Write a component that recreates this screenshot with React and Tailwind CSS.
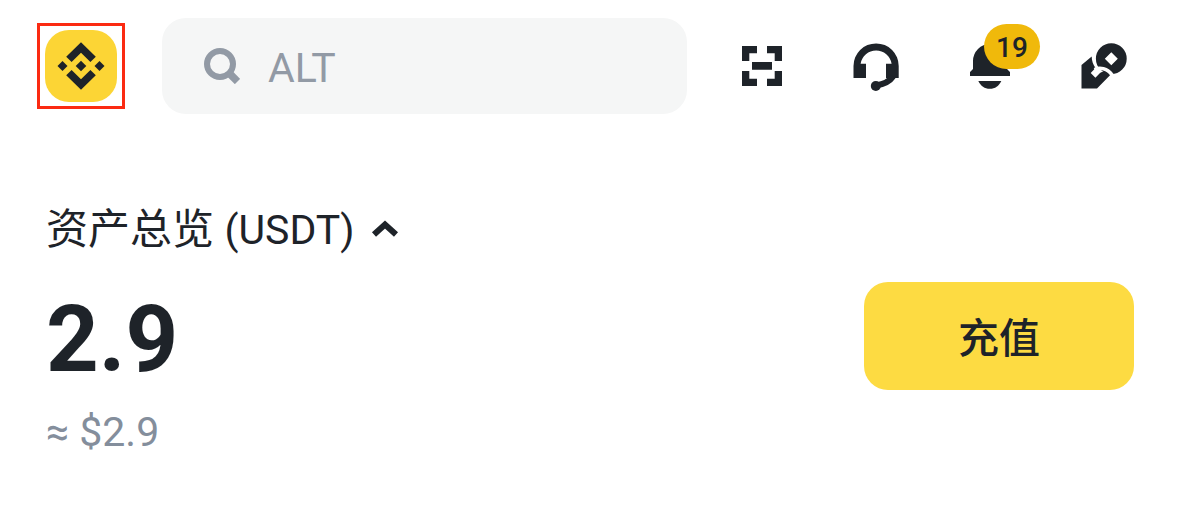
const INK = "text-[#1e2329]";

function BrandLogo() {
  return (
    <svg viewBox="0 0 72 72" className="size-full" fill="currentColor" aria-hidden="true">
      <path d="M36 12.3 50.8 26.8 45.4 32 36 22.8 26.6 32 21.2 26.8Z" />
      <path d="M36 59.7 50.8 45.2 45.4 40 36 49.2 26.6 40 21.2 45.2Z" />
      <path d="M36 30.7 41.3 36 36 41.3 30.7 36Z" />
      <path d="M17.5 31 22.5 36 17.5 41 12.5 36Z" />
      <path d="M54.5 31 59.5 36 54.5 41 49.5 36Z" />
    </svg>
  );
}

function SearchIcon() {
  return (
    <svg viewBox="0 0 36 36" className="size-9 shrink-0" fill="none" stroke="currentColor" strokeWidth="6" aria-hidden="true">
      <circle cx="16" cy="16" r="13" />
      <path d="M25 25 33.5 33.5" strokeWidth="7.5" />
    </svg>
  );
}

function ScanIcon() {
  return (
    <svg viewBox="0 0 48 48" className="size-12" fill="currentColor" aria-hidden="true">
      <path d="M4 4H19V11.3H11.3V19H4ZM29 4H44V19H36.7V11.3H29ZM4 29H11.3V36.7H19V44H4ZM36.7 29H44V44H29V36.7H36.7ZM14 20H34V27.7H14Z" />
    </svg>
  );
}

function HeadsetIcon() {
  return (
    <svg viewBox="0 0 48 48" className="size-12 overflow-visible" fill="currentColor" aria-hidden="true">
      <path d="M1.5 36V24A22.6 22.6 0 0 1 46.7 24V36H34V21.7H39.6A15.7 15.7 0 0 0 8.6 21.7H14V36Z" />
      <path d="M41 34.5C38 39 33 42 24 43.5" fill="none" stroke="currentColor" strokeWidth="6" />
      <circle cx="23.8" cy="44" r="5" />
    </svg>
  );
}

function BellIcon() {
  return (
    <svg viewBox="0 0 48 48" className="size-12" fill="currentColor" aria-hidden="true">
      <path d="M7 19A17 17 0 0 1 41 19V27L44 30V34H4V30L7 27Z" />
      <path d="M12.3 39H35.3C33 44 29 46.8 23.8 46.8S14.7 44 12.3 39Z" />
    </svg>
  );
}

function HandCoinIcon() {
  return (
    <svg viewBox="0 0 48 48" className="size-12" fill="currentColor" aria-hidden="true">
      <path fillRule="evenodd" d="M31.3 1.3A15.4 15.4 0 1 1 31.3 32.1A15.4 15.4 0 1 1 31.3 1.3ZM31.3 10.2 24.8 16.7 31.3 23.2 37.8 16.7Z" />
      <path d="M1.5 46.5V23L11.7 14.5C11.7 18.5 13 22.5 15.5 26L10.7 31 15.4 35.7 20 31C23 29 27 29.5 30.5 32.7L17 46.5Z" />
      <path d="M14.5 27.5C19.5 25 27.5 26 32 33" fill="none" stroke="white" strokeWidth="3.5" />
    </svg>
  );
}

function ActionButton({ label, children }) {
  return (
    <button type="button" aria-label={label} className="relative size-12 shrink-0">
      {children}
    </button>
  );
}

export default function App() {
  return (
    <div className={`bg-white font-[Roboto,'Noto_Sans_CJK_SC',sans-serif] ${INK}`}>
      <header className="flex items-center pt-[18px] pr-[51px] pl-[37px]">
        <button
          type="button"
          aria-label="Binance"
          className="shrink-0 border-3 border-[#fb2a12] px-[5px] py-1"
        >
          <span className="block size-18 rounded-3xl bg-[#fcd535]">
            <BrandLogo />
          </span>
        </button>
        <label className="mr-[51px] ml-[37px] flex h-24 min-w-0 flex-1 items-center gap-7 rounded-3xl bg-[#f5f6f6] px-[42px] text-[#929aa5]">
          <SearchIcon />
          <input
            type="search"
            aria-label="搜索"
            placeholder="ALT"
            className="w-full min-w-0 bg-transparent pt-1 text-[41px] leading-12 outline-none placeholder:text-[#929aa5]"
          />
        </label>
        <nav className="flex gap-[66px]">
          <ActionButton label="扫一扫">
            <ScanIcon />
          </ActionButton>
          <ActionButton label="客服">
            <HeadsetIcon />
          </ActionButton>
          <ActionButton label="通知">
            <BellIcon />
            <span className="absolute -top-[18px] left-[18px] flex h-[45px] w-14 items-center justify-center rounded-full bg-[#f0b90b] pt-0.5 text-[28px] leading-8 font-medium">
              19
            </span>
          </ActionButton>
          <ActionButton label="理财">
            <HandCoinIcon />
          </ActionButton>
        </nav>
      </header>

      <main className="pt-[92px] pr-[45px] pb-16 pl-[46px]">
        <button type="button" className="flex items-center gap-4 text-[42px] leading-12">
          <span>
            资产总览 <span className="text-[41px]">(USDT)</span>
          </span>
          <svg viewBox="0 0 28 20" className="h-5 w-7" fill="none" stroke="currentColor" strokeWidth="6" aria-hidden="true">
            <path d="M3 14.5 14 4.5 25 14.5" />
          </svg>
        </button>
        <div className="mt-7 flex items-center justify-between">
          <p className="pt-2 text-[92px] leading-[100px] font-bold">2.9</p>
          <button
            type="button"
            className="h-[108px] w-[270px] rounded-3xl bg-[#fddb42] pt-1.5 text-[41px] leading-12 font-medium"
          >
            充值
          </button>
        </div>
        <p className="mt-[18px] text-[41px] leading-12 text-[#848e9c]">≈ $2.9</p>
      </main>
    </div>
  );
}
